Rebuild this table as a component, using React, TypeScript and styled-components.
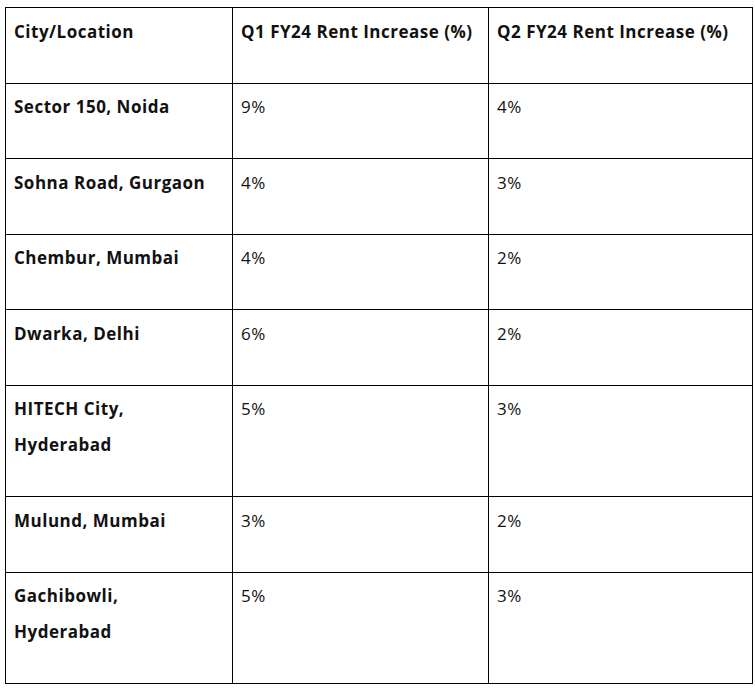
import React from "react";
import styled, { createGlobalStyle } from "styled-components";

const GlobalStyle = createGlobalStyle`
  html, body {
    margin: 0;
    padding: 0;
    background: #fff;
  }
  body {
    font-family: "Open Sans", "Liberation Sans", sans-serif;
    color: #000;
  }
`;

const Page = styled.div`
  padding: 7px 4px 0 5px;
`;

const Table = styled.table`
  border-collapse: collapse;
  width: 747px;
  table-layout: fixed;
`;

const Col = styled.col<{ $w: number }>`
  width: ${(p) => p.$w}px;
`;

const Cell = styled.td<{ $bold?: boolean }>`
  border: 1px solid #000;
  vertical-align: top;
  padding: 5.5px 6px 33px 8px;
  font-size: 17px;
  letter-spacing: 0.5px;
  line-height: 36px;
  font-weight: ${(p) => (p.$bold ? 700 : 400)};
  color: #111;
  white-space: normal;
`;

// first column wraps the longer place names onto two lines
const CityCell = styled(Cell)`
  padding-right: 14px;
  font-weight: 700;
`;

const rows = [
  ["Sector 150, Noida", "9%", "4%"],
  ["Sohna Road, Gurgaon", "4%", "3%"],
  ["Chembur, Mumbai", "4%", "2%"],
  ["Dwarka, Delhi", "6%", "2%"],
  ["HITECH City, Hyderabad", "5%", "3%"],
  ["Mulund, Mumbai", "3%", "2%"],
  ["Gachibowli, Hyderabad", "5%", "3%"],
];

export default function App() {
  return (
    <Page>
      <GlobalStyle />
      <Table>
        <colgroup>
          <Col $w={227} />
          <Col $w={256} />
          <Col $w={264} />
        </colgroup>
        <tbody>
          <tr>
            <CityCell>City/Location</CityCell>
            <Cell $bold>Q1 FY24 Rent Increase (%)</Cell>
            <Cell $bold>Q2 FY24 Rent Increase (%)</Cell>
          </tr>
          {rows.map(([city, q1, q2]) => (
            <tr key={city}>
              <CityCell>{city}</CityCell>
              <Cell>{q1}</Cell>
              <Cell>{q2}</Cell>
            </tr>
          ))}
        </tbody>
      </Table>
    </Page>
  );
}
